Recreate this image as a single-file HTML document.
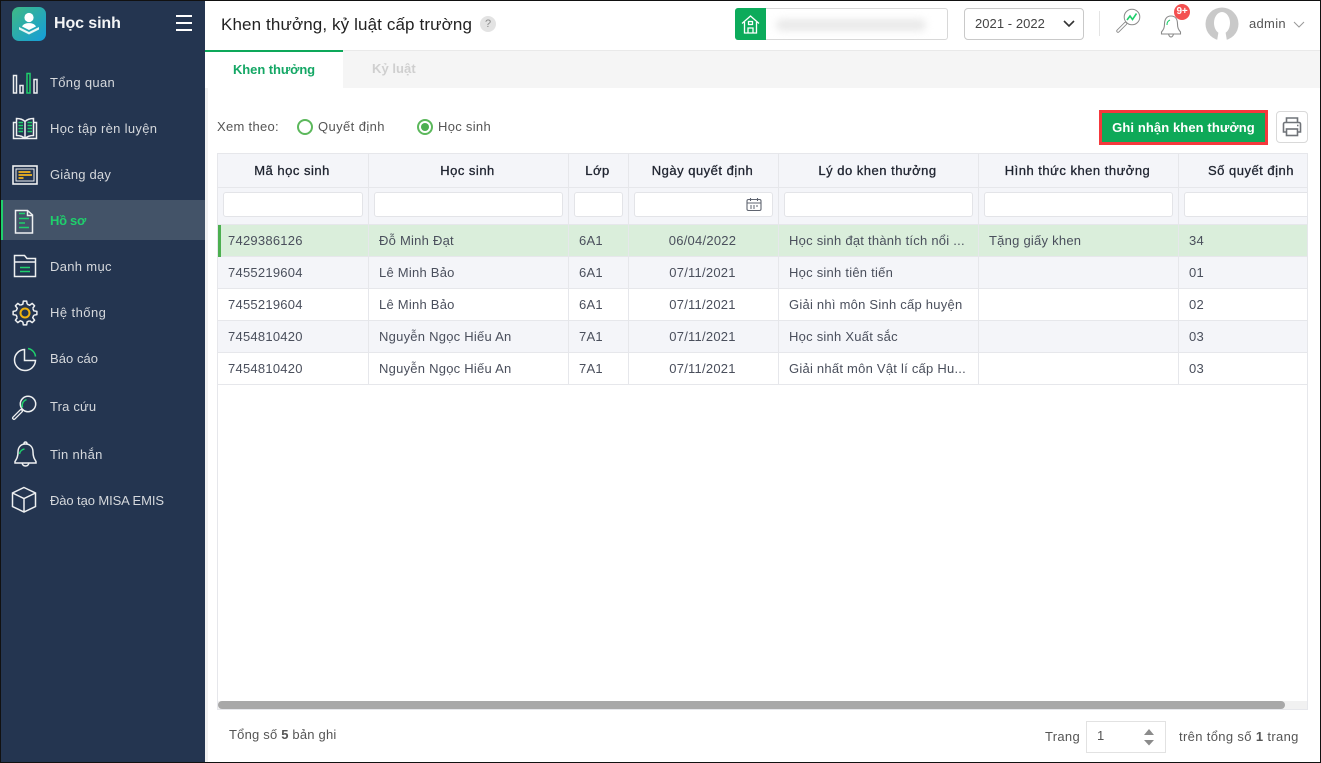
<!DOCTYPE html>
<html lang="vi"><head><meta charset="utf-8"><title>Khen thưởng, kỷ luật cấp trường</title>
<style>
*{box-sizing:border-box}
html,body{margin:0;padding:0}
body{width:1321px;height:763px;overflow:hidden;background:#fff;font-family:"Liberation Sans",Arial,sans-serif;font-size:13px;color:#4a4f5c;position:relative}
.a{position:absolute;white-space:nowrap}
#side{left:1px;top:1px;width:204px;height:761px;background:#243550}
.m{left:50px;color:#d5d8dc;font-size:13px;letter-spacing:.32px;line-height:18px}
svg{position:absolute;overflow:visible}
table{border-collapse:collapse;table-layout:fixed;position:absolute;left:-1px;top:-1px;width:1108px}
th,td{padding:0;border:1px solid #e6e7eb;overflow:hidden;white-space:nowrap}
th{background:#f4f5f9;font-size:13px;color:#1f2430;font-weight:400;letter-spacing:.5px;-webkit-text-stroke:.3px #1f2430;height:34px;text-align:center;padding:0 2px 1px 0}
tr.f td{background:#f4f5f9;height:37px;padding:4px 5px 0;vertical-align:top}
.i{height:25px;background:#fff;border:1px solid #e3e4e8;border-radius:3px;position:relative}
tr.r td{height:32px;padding:0 0 0 10px;letter-spacing:.24px;color:#4a4f5c}
tr.r td.c{text-align:center;padding:0 2px 0 0}
tr.alt td{background:#f4f5f9}
tr.sel td{background:#daeedb}
#bd{position:absolute;left:0;top:0;width:1321px;height:763px;border:1px solid #111;pointer-events:none}
</style></head>
<body>
<div class="a" id="side"></div>
<!-- logo -->
<div class="a" style="left:12px;top:7px;width:34px;height:34px;border-radius:7px;background:linear-gradient(135deg,#3fb984,#149ddb)"></div>
<svg style="left:12px;top:7px" width="34" height="34" viewBox="0 0 34 34"><circle cx="17" cy="10.500" r="4.600" fill="#fff"/><path d="M10 19.500c1.500-2.600 4-3.400 7-3.400s5.500.8 7 3.400l-7 3.500z" fill="#fff"/><path d="M7 20l10 5 10-5v2.500l-10 5-10-5z" fill="#e8f6f4"/></svg>
<div class="a" style="left:54px;top:13px;color:#f4f5f6;font-size:16px;font-weight:700;line-height:22px;letter-spacing:-.1px">Học sinh</div>
<div class="a" style="left:176px;top:15px;width:16px;height:2px;background:#fff"></div>
<div class="a" style="left:176px;top:22px;width:16px;height:2px;background:#fff"></div>
<div class="a" style="left:176px;top:29px;width:16px;height:2px;background:#fff"></div>

<div class="a" style="left:1px;top:200px;width:204px;height:40px;background:#435368"></div>
<div class="a" style="left:1px;top:200px;width:2px;height:40px;background:#1fcf6c"></div>

<div class="a m" style="top:74px">Tổng quan</div>
<div class="a m" style="top:120px">Học tập rèn luyện</div>
<div class="a m" style="top:166px;letter-spacing:.2px">Giảng dạy</div>
<div class="a m" style="top:212px;color:#1fcf6c;font-weight:700;letter-spacing:-.3px">Hồ sơ</div>
<div class="a m" style="top:258px">Danh mục</div>
<div class="a m" style="top:304px;letter-spacing:.44px">Hệ thống</div>
<div class="a m" style="top:350px;letter-spacing:.05px">Báo cáo</div>
<div class="a m" style="top:398px;letter-spacing:.18px">Tra cứu</div>
<div class="a m" style="top:446px">Tin nhắn</div>
<div class="a m" style="top:492px;letter-spacing:-.1px">Đào tạo MISA EMIS</div>

<svg style="left:0;top:0" width="50" height="530" fill="none" stroke="#eef0f1" stroke-width="1.500">
<rect x="13.500" y="75.500" width="3" height="17.500"/><rect x="20" y="85.500" width="3" height="7.500"/><rect x="27" y="73.500" width="3" height="19.500" stroke="#1fcf6c"/><rect x="34" y="79.500" width="3" height="13.500"/>
<path d="M25 121.500c-2-2-5-3-8.500-3v17c3.500 0 6.500 1 8.500 3 2-2 5-3 8.500-3v-17c-3.500 0-6.500 1-8.500 3zM25 121.500v16.500M16.500 122.500h-3v16h23v-16h-3"/>
<path d="M18.500 122.500h4.500M18.500 125.500h4.500M18.500 128.500h4.500M18.500 131.500h4.500M27.500 122.500h4.500M27.500 125.500h4.500M27.500 128.500h4.500M27.500 131.500h4.500" stroke="#1fcf6c"/>
<rect x="13" y="166" width="24" height="18" stroke-width="1.600"/><rect x="16" y="169" width="18" height="12" stroke-width="1"/>
<path d="M18.500 172h12M18.500 175h13.500M18.500 178h5" stroke="#d9a526" stroke-width="2"/>
<path d="M15.500 210.500v22.500h17v-18l-5-4.500zM27.500 210.500v5h5"/><path d="M19 213.500h6M19 218.500h10M19 223h6M19 227.500h10" stroke="#1fcf6c"/>
<path d="M14.500 255.500h10l2.500 3h8.500v18h-21zM14.500 262h21"/><path d="M20 267.500h10M20 271.500h10" stroke="#1fcf6c"/>
<g stroke-linejoin="round">
<path transform="translate(25 313)" d="M7.710 -4.640A9 9 0 0 1 8.730 -2.180L11.880 -1.670V1.670L8.730 2.180"/>
<path transform="translate(25 313) rotate(45)" d="M7.710 -4.640A9 9 0 0 1 8.730 -2.180L11.880 -1.670V1.670L8.730 2.180"/>
<path transform="translate(25 313) rotate(90)" d="M7.710 -4.640A9 9 0 0 1 8.730 -2.180L11.880 -1.670V1.670L8.730 2.180"/>
<path transform="translate(25 313) rotate(135)" d="M7.710 -4.640A9 9 0 0 1 8.730 -2.180L11.880 -1.670V1.670L8.730 2.180"/>
<path transform="translate(25 313) rotate(180)" d="M7.710 -4.640A9 9 0 0 1 8.730 -2.180L11.880 -1.670V1.670L8.730 2.180"/>
<path transform="translate(25 313) rotate(225)" d="M7.710 -4.640A9 9 0 0 1 8.730 -2.180L11.880 -1.670V1.670L8.730 2.180"/>
<path transform="translate(25 313) rotate(270)" d="M7.710 -4.640A9 9 0 0 1 8.730 -2.180L11.880 -1.670V1.670L8.730 2.180"/>
<path transform="translate(25 313) rotate(315)" d="M7.710 -4.640A9 9 0 0 1 8.730 -2.180L11.880 -1.670V1.670L8.730 2.180"/>
</g>
<circle cx="25" cy="313" r="4.500" stroke="#efb20e" stroke-width="2"/>
<path d="M24.500 349.500A10.500 10.500 0 1 0 35.500 360.500H24.500Z"/><path d="M28 348.500A9 9 0 0 1 35.500 356.500" stroke="#1fcf6c"/>
<circle cx="28" cy="404" r="7.700"/>
<path d="M21 411l-7 7" stroke-width="4" stroke-linecap="round"/><path d="M21 411l-7 7" stroke="#243550" stroke-width="1.400" stroke-linecap="round"/>
<path d="M22.500 407.500a6 6 0 0 1 4-7.800" stroke="#1fcf6c"/>
<path d="M25.500 444c-5 0-7.500 3.500-7.500 8 0 5-1.500 7-3 9.500v1.500h21v-1.500c-1.500-2.500-3-4.500-3-9.500 0-4.500-2.500-8-7.500-8zM24 443.500a1.500 1.500 0 0 1 3 0M22 463c.5 2 2 3 3.500 3s3-1 3.500-3"/><path d="M19.500 454a6 6 0 0 1 5-5" stroke="#1fcf6c"/>
<path d="M24 487.500l11.500 5.500v13.500l-11.500 5.500-11.500-5.500v-13.500zM12.500 493l11.500 5.500 11.500-5.500M24 498.500v13.500"/>
</svg>

<!-- header -->
<div class="a" style="left:205px;top:50px;width:1115px;height:1px;background:#e9e9e9"></div>
<div class="a" style="left:221px;top:13px;font-size:17px;line-height:23px;color:#222;letter-spacing:.12px">Khen thưởng, kỷ luật cấp trường</div>
<div class="a" style="left:480px;top:16px;width:16px;height:16px;border-radius:50%;background:#e3e3e3;color:#8a8a8a;font-size:11px;line-height:16px;text-align:center">?</div>

<div class="a" style="left:735px;top:8px;width:213px;height:32px;border:1px solid #d8d8d8;border-radius:3px;background:#fff"></div>
<div class="a" style="left:735px;top:8px;width:31px;height:32px;background:#0cab5b;border-radius:3px 0 0 3px"></div>
<svg style="left:735px;top:8px" width="31" height="32" fill="none" stroke="#fff" stroke-width="1.300"><path d="M7 15.500l8.500-7.500 8.500 7.500M9.500 14v11h12v-11M13 25v-5h5v5"/><rect x="13.500" y="13.500" width="4" height="3"/></svg>
<div class="a" style="left:776px;top:19px;width:150px;height:12px;background:#e9e9e9;border-radius:6px;filter:blur(4px)"></div>

<div class="a" style="left:964px;top:8px;width:120px;height:32px;border:1px solid #c9c9c9;border-radius:4px;background:#fff"></div>
<div class="a" style="left:975px;top:15px;font-size:13px;line-height:18px;letter-spacing:.05px;color:#444">2021 - 2022</div>
<svg style="left:1063px;top:20px" width="12" height="8" fill="none" stroke="#333" stroke-width="1.600"><path d="M1 1l5 5 5-5"/></svg>
<div class="a" style="left:1099px;top:11px;width:1px;height:25px;background:#e4e4e4"></div>

<svg style="left:1114px;top:6px" width="30" height="30" fill="none" stroke="#8a8a8a" stroke-width="1"><circle cx="18" cy="11" r="7.800"/><path d="M11.500 17.500l-7.500 7.500" stroke-width="3.400" stroke-linecap="round"/><path d="M11.500 17.500l-7.500 7.500" stroke="#fff" stroke-width="1.600" stroke-linecap="round"/><path d="M13 14l3-4 2.500 3.500 4-6" stroke="#1fcf6c" stroke-width="1.600"/></svg>
<svg style="left:1158px;top:8px" width="30" height="32" fill="none" stroke="#8a8a8a" stroke-width="1.100"><path d="M13 8c-4.500 0-6.500 3.500-6.500 8 0 4-1 5.500-3 8v2h19v-2c-2-2.500-3-4-3-8 0-4.500-2-8-6.500-8zM10.500 26c.5 2 1.500 3 2.500 3s2-1 2.500-3"/><path d="M9 17a5 5 0 0 1 3-5" stroke="#1fcf6c"/></svg>
<div class="a" style="left:1174px;top:4px;width:16px;height:16px;border-radius:50%;background:#f45050;color:#fff;font-size:10px;font-weight:700;line-height:16px;text-align:center;letter-spacing:-.2px">9+</div>
<svg style="left:1205px;top:7px" width="34" height="34"><circle cx="17" cy="17" r="16.500" fill="#c9c9c9"/><ellipse cx="17" cy="16" rx="8" ry="11" fill="#fff"/><path d="M13.500 25h7l1.500 9h-10z" fill="#fff"/></svg>
<div class="a" style="left:1249px;top:15px;font-size:13px;line-height:18px;letter-spacing:.3px;color:#555">admin</div>
<svg style="left:1293px;top:21px" width="12" height="7" fill="none" stroke="#999" stroke-width="1"><path d="M1 1l5 5 5-5"/></svg>

<!-- tabs -->
<div class="a" style="left:205px;top:51px;width:1115px;height:37px;background:#f5f5f5"></div>
<div class="a" style="left:205px;top:50px;width:138px;height:38px;background:#fff;border-top:2px solid #0da85a"></div>
<div class="a" style="left:233px;top:61px;font-size:13px;font-weight:700;line-height:18px;color:#14a765;letter-spacing:-.08px">Khen thưởng</div>
<div class="a" style="left:372px;top:60px;font-size:13px;font-weight:700;line-height:18px;color:#cfcfcf;letter-spacing:.05px">Kỷ luật</div>
<div class="a" style="left:205px;top:88px;width:3px;height:674px;background:#f1f1f1"></div>

<!-- filter row -->
<div class="a" style="left:217px;top:118px;line-height:18px;letter-spacing:.3px;color:#555">Xem theo:</div>
<div class="a" style="left:297px;top:119px;width:16px;height:16px;border:2px solid #5cb85c;border-radius:50%;background:#fff"></div>
<div class="a" style="left:318px;top:118px;line-height:18px;letter-spacing:.4px;color:#555">Quyết định</div>
<div class="a" style="left:417px;top:119px;width:16px;height:16px;border:2px solid #5cb85c;border-radius:50%;background:#fff"></div>
<div class="a" style="left:421px;top:123px;width:8px;height:8px;border-radius:50%;background:#4caf50"></div>
<div class="a" style="left:438px;top:118px;line-height:18px;letter-spacing:.3px;color:#555">Học sinh</div>

<div class="a" style="left:1099px;top:110px;width:169px;height:35px;border:3px solid #f5383c;background:#0ea958;color:#fff;font-weight:700;font-size:13px;line-height:29px;text-align:center;letter-spacing:.1px">Ghi nhận khen thưởng</div>
<div class="a" style="left:1276px;top:111px;width:32px;height:32px;border:1px solid #d9d9d9;border-radius:4px;background:#fff"></div>
<svg style="left:1276px;top:111px" width="32" height="32" fill="none" stroke="#6f7378" stroke-width="1.600"><path d="M10.500 11.500v-4.500h11v4.500M10.500 21h-3v-8a1.500 1.500 0 0 1 1.500-1.500h14a1.500 1.500 0 0 1 1.500 1.500v8h-3"/><rect x="10.500" y="18" width="11" height="6.500"/><path d="M21 14.500h1.500"/></svg>

<!-- grid -->
<div class="a" style="left:217px;top:153px;width:1091px;height:557px;border:1px solid #e6e7eb;overflow:hidden;background:#fff;white-space:normal">
<table>
<colgroup><col style="width:151px"><col style="width:200px"><col style="width:60px"><col style="width:150px"><col style="width:200px"><col style="width:200px"><col style="width:147px"></colgroup>
<tr><th>Mã học sinh</th><th>Học sinh</th><th>Lớp</th><th>Ngày quyết định</th><th>Lý do khen thưởng</th><th>Hình thức khen thưởng</th><th>Số quyết định</th></tr>
<tr class="f"><td><div class="i"></div></td><td><div class="i"></div></td><td><div class="i"></div></td><td><div class="i"><svg style="left:111px;top:4px" width="16" height="15" fill="none" stroke="#5f6470" stroke-width="1.100"><rect x="1" y="2.500" width="14" height="11" rx="1.500"/><path d="M1 6h14M4.500 1v3M11.500 1v3M4 9h2M7 9h2M10 9h2M4 11h2M7 11h2"/></svg></div></td><td><div class="i"></div></td><td><div class="i"></div></td><td><div class="i"></div></td></tr>
<tr class="r sel"><td>7429386126</td><td>Đỗ Minh Đạt</td><td>6A1</td><td class="c">06/04/2022</td><td>Học sinh đạt thành tích nổi ...</td><td>Tặng giấy khen</td><td>34</td></tr>
<tr class="r alt"><td>7455219604</td><td>Lê Minh Bảo</td><td>6A1</td><td class="c">07/11/2021</td><td>Học sinh tiên tiến</td><td></td><td>01</td></tr>
<tr class="r"><td>7455219604</td><td>Lê Minh Bảo</td><td>6A1</td><td class="c">07/11/2021</td><td>Giải nhì môn Sinh cấp huyện</td><td></td><td>02</td></tr>
<tr class="r alt"><td>7454810420</td><td>Nguyễn Ngọc Hiếu An</td><td>7A1</td><td class="c">07/11/2021</td><td>Học sinh Xuất sắc</td><td></td><td>03</td></tr>
<tr class="r"><td>7454810420</td><td>Nguyễn Ngọc Hiếu An</td><td>7A1</td><td class="c">07/11/2021</td><td>Giải nhất môn Vật lí cấp Hu...</td><td></td><td>03</td></tr>
</table>
</div>
<div class="a" style="left:218px;top:225px;width:3px;height:32px;background:#4caf50"></div>
<div class="a" style="left:218px;top:701px;width:1089px;height:8px;background:#f1f1f1"></div>
<div class="a" style="left:218px;top:701px;width:1067px;height:8px;background:#a8a8a8;border-radius:4px"></div>

<!-- footer -->
<div class="a" style="left:229px;top:726px;line-height:18px;letter-spacing:.2px;color:#555">Tổng số <b>5</b> bản ghi</div>
<div class="a" style="left:1045px;top:728px;line-height:18px;letter-spacing:.3px;color:#555">Trang</div>
<div class="a" style="left:1086px;top:721px;width:80px;height:32px;border:1px solid #e2e2e2;background:#fff"></div>
<div class="a" style="left:1097px;top:727px;line-height:18px;color:#555">1</div>
<svg style="left:1143px;top:729px" width="12" height="18" fill="#8b8b8b"><path d="M6 0l5 6h-10zM1 11h10l-5 5.500z"/></svg>
<div class="a" style="left:1179px;top:728px;line-height:18px;letter-spacing:.35px;color:#555">trên tổng số <b>1</b> trang</div>

<div id="bd"></div>
</body></html>
